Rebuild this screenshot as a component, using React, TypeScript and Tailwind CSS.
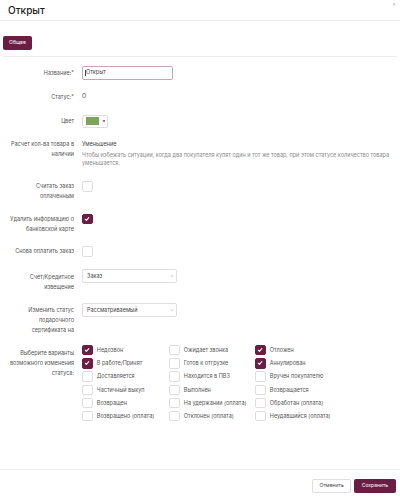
import React from 'react';

const Box = ({ on }: { on?: boolean }) => (
  <span
    className={`flex h-[10.5px] w-[10.5px] shrink-0 items-center justify-center rounded-[2px] border ${
      on ? 'border-[#6b1e44] bg-[#6b1e44]' : 'border-[#dedede] bg-white'
    }`}
  >
    {on && (
      <svg viewBox="0 0 10 10" className="h-[6px] w-[6px]">
        <path d="M2 5.3l2 2 4-4.6" fill="none" stroke="white" strokeWidth="1.7" strokeLinecap="round" strokeLinejoin="round" />
      </svg>
    )}
  </span>
);

const Chevron = () => (
  <svg viewBox="0 0 10 10" className="h-[4px] w-[4px]">
    <path d="M2 3.5l3 3 3-3" fill="none" stroke="#888" strokeWidth="1.3" />
  </svg>
);

const Label = ({ children, className = '' }: { children: React.ReactNode; className?: string }) => (
  <div className={`ml-[6px] w-[68px] shrink-0 text-right text-[5.5px] leading-[10px] text-[#555] ${className}`}>{children}</div>
);

const Req = () => <span className="text-[#c0392b]">*</span>;

const statuses: [string, boolean][] = [
  ['Недозвон', true],
  ['Ожидает звонка', false],
  ['Отложен', true],
  ['В работе/Принят', true],
  ['Готов к отгрузке', false],
  ['Аннулирован', true],
  ['Доставляется', false],
  ['Находится в ПВЗ', false],
  ['Вручен покупателю', false],
  ['Частичный выкуп', false],
  ['Выполнен', false],
  ['Возвращается', false],
  ['Возвращен', false],
  ['На удержании (оплата)', false],
  ['Обработан (оплата)', false],
  ['Возвращено (оплата)', false],
  ['Отклонен (оплата)', false],
  ['Неудавшийся (оплата)', false],
];

export default function App() {
  return (
    <div className="flex h-[500px] w-[400px] flex-col bg-white font-['Inter',sans-serif] text-[#444]">
      {/* header */}
      <div className="flex h-[21px] shrink-0 items-center justify-between border-b border-[#eeeeee] pl-[8px] pr-[4px]">
        <span className="text-[10px] font-medium text-[#222]">Открыт</span>
        <span className="mb-auto mt-[1px] text-[6px] leading-none text-[#b5b5b5]">×</span>
      </div>

      {/* tabs */}
      <div className="mx-[3px] border-b border-[#eeeeee] pb-[6px] pt-[14.5px]">
        <button className="flex h-[14px] w-[29px] items-center justify-center rounded-[2px] bg-[#6b1e44] text-[5px] text-white">
          Общее
        </button>
      </div>

      {/* form */}
      <div className="flex flex-col">
        <div className="mt-[9px] flex items-center">
          <Label>
            Название:<Req />
          </Label>
          <div className="ml-[8px] flex h-[14px] w-[91px] items-center rounded-[2px] border border-[#c9a5b3] px-[2px] text-[5.5px] text-[#444]">
            <span className="mr-[0.5px] h-[6px] w-[0.5px] bg-[#444]" />
            Открыт
          </div>
        </div>

        <div className="mt-[12px] flex h-[10px] items-center">
          <Label>
            Статус:<Req />
          </Label>
          <span className="ml-[8px] text-[5.5px] text-[#444]">О</span>
        </div>

        <div className="mt-[13px] flex items-center">
          <Label>Цвет</Label>
          <div className="ml-[8px] flex h-[13px] w-[26px] items-center gap-[3px] rounded-[2px] border border-[#dedede] pl-[2.5px]">
            <span className="h-[8px] w-[13px] bg-[#7da35c]" />
            <svg viewBox="0 0 10 10" className="h-[4px] w-[4px]">
              <path d="M1.5 3h7L5 8z" fill="#8c1d3f" />
            </svg>
          </div>
        </div>

        <div className="mt-[11px] flex items-start">
          <Label>Расчет кол-ва товара в наличии</Label>
          <div className="ml-[8px] flex-1 pr-[8px]">
            <div className="text-[5.5px] leading-[10px] text-[#444]">Уменьшение</div>
            <div className="mt-[2px] text-[5.5px] leading-[8.5px] text-[#8a8a8a]">
              Чтобы избежать ситуации, когда два покупателя купят один и тот же товар, при этом статусе количество товара
              уменьшается.
            </div>
          </div>
        </div>

        <div className="mt-[13px] flex items-start">
          <Label>Считать заказ оплаченным</Label>
          <div className="ml-[8px] mt-[0.5px]">
            <Box />
          </div>
        </div>

        <div className="mt-[13.3px] flex items-start">
          <Label>Удалить информацию о банковской карте</Label>
          <div className="ml-[8px]">
            <Box on />
          </div>
        </div>

        <div className="mt-[12.7px] flex items-start">
          <Label>Снова оплатить заказ</Label>
          <div className="ml-[8px]">
            <Box />
          </div>
        </div>

        <div className="mt-[12px] flex items-start">
          <Label className="pt-[2.7px]">Счет/Кредитное извещение</Label>
          <div className="ml-[8px] flex h-[14px] w-[95px] items-center justify-between rounded-[2px] border border-[#dedede] pl-[4px] pr-[2px] text-[5.5px] text-[#444]">
            Заказ
            <Chevron />
          </div>
        </div>

        <div className="mt-[11px] flex items-start">
          <Label className="pt-[2.3px]">Изменить статус подарочного сертификата на</Label>
          <div className="ml-[8px] flex h-[14px] w-[95px] items-center justify-between rounded-[2px] border border-[#dedede] pl-[4px] pr-[2px] text-[5.5px] text-[#444]">
            Рассматриваемый
            <Chevron />
          </div>
        </div>

        <div className="mt-[10px] flex items-start">
          <Label className="pt-[3px] leading-[10.7px]">Выберите варианты возможного изменения статуса:</Label>
          <div className="ml-[8px] grid grid-cols-[87px_86px_87px] gap-y-[2.7px]">
            {statuses.map(([name, on]) => (
              <div key={name} className="flex h-[10.5px] items-center gap-[4.3px]">
                <Box on={on} />
                <span className="whitespace-nowrap text-[5.5px] text-[#555]">{name}</span>
              </div>
            ))}
          </div>
        </div>
      </div>

      {/* footer */}
      <div className="mt-auto flex h-[31px] shrink-0 items-start justify-end gap-[3.3px] border-t border-[#eeeeee] pr-[4.3px] pt-[8.5px]">
        <button className="flex h-[14px] w-[38.5px] items-center justify-center rounded-[2px] border border-[#dedede] bg-white text-[5px] text-[#444]">
          Отменить
        </button>
        <button className="flex h-[14px] w-[41.5px] items-center justify-center rounded-[2px] bg-[#6b1e44] text-[5px] text-white">
          Сохранить
        </button>
      </div>
    </div>
  );
}
